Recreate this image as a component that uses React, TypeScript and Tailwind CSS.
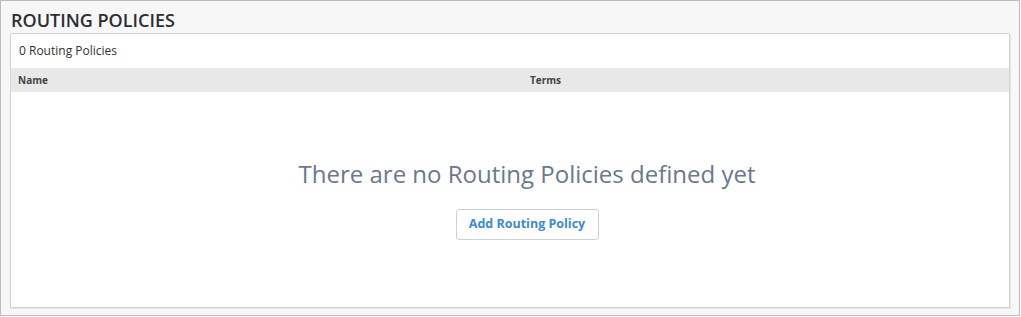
export default function App() {
  return (
    <div
      className="w-[1021px] h-[317px] bg-white"
      style={{ fontFamily: '"Open Sans", "Liberation Sans", sans-serif' }}
    >
      <div className="w-[1020px] h-[316px] border border-[#bcbcbc] bg-[#f7f7f7] flex flex-col px-[9px] pb-[7px]">
        <h1 className="h-[32px] pt-[7px] pl-[1px] text-[18px] leading-[24px] font-semibold text-[#2d2f33]">
          ROUTING POLICIES
        </h1>
        <div className="flex-1 flex flex-col bg-white border border-[#d4d4d4] rounded-t-[2px] shadow-[1px_1px_0_#e4e4e4]">
          <div className="h-[34px] flex items-center pl-[8px] text-[12px] text-[#333]">
            0 Routing Policies
          </div>
          <div className="h-[24px] flex items-center bg-[#e8e8e9] text-[10px] font-bold text-[#444]">
            <div className="w-[519px] pl-[7px]">Name</div>
            <div>Terms</div>
          </div>
          <div className="flex-1 flex flex-col items-center pl-[34px] pt-[66px]">
            <p className="text-[24px] leading-[32px] text-[#6b7890]">
              There are no Routing Policies defined yet
            </p>
            <button className="mt-[19px] h-[31px] w-[143px] border border-[#c6d2de] rounded-[3px] bg-white text-[12.5px] font-bold text-[#3a8ad8]">
              Add Routing Policy
            </button>
          </div>
        </div>
      </div>
    </div>
  );
}
